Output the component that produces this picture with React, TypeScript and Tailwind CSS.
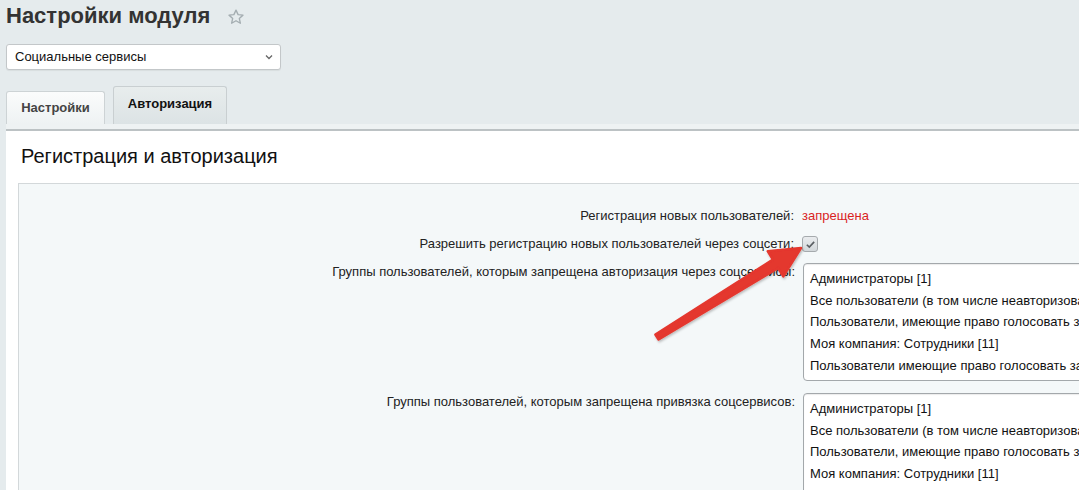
import React from "react";

const items = [
  "Администраторы [1]",
  "Все пользователи (в том числе неавторизованные) [2]",
  "Пользователи, имеющие право голосовать за рейтинг [3]",
  "Моя компания: Сотрудники [11]",
  "Пользователи имеющие право голосовать за авторитет [4]",
];

function ListBox() {
  return (
    <div className="shrink-0 w-[420px] h-[118px] overflow-hidden border border-[#a3a8ab] rounded-l-[4px] bg-white pt-[4px] px-[6px] shadow-[inset_0_1px_1px_rgba(0,0,0,0.08)]">
      {items.map((t) => (
        <div key={t} className="leading-[21.7px] whitespace-nowrap text-[13px] text-[#111]">
          {t}
        </div>
      ))}
    </div>
  );
}

export default function App() {
  return (
    <div
      className="relative w-[1079px] h-[490px] overflow-hidden bg-[#e5ebed] text-[13px]"
      style={{ fontFamily: '"Liberation Sans", Arial, sans-serif' }}
    >
      <div className="pl-[6px] pt-[2px] flex items-center h-[30px]">
        <h1 className="text-[22px] font-bold text-[#333] leading-[30px]">Настройки модуля</h1>
        <svg className="ml-[17px] mt-[1px]" width="18" height="18" viewBox="0 0 24 24" fill="none" stroke="#a4adb1" strokeWidth="1.8" strokeLinejoin="round">
          <path d="M12 2.8l2.8 6 6.5.7-4.9 4.4 1.4 6.4L12 17l-5.8 3.3 1.4-6.4-4.9-4.4 6.5-.7z" />
        </svg>
      </div>

      <div className="ml-[6px] mt-[14px] w-[275px] h-[26px] bg-white border border-[#c3c7c9] rounded-[3px] flex items-center justify-between pl-[8px] pr-[6px] shadow-[0_1px_1px_rgba(0,0,0,0.06)]">
        <span className="text-[#111]">Социальные сервисы</span>
        <svg width="10" height="10" viewBox="0 0 10 10" fill="none" stroke="#666" strokeWidth="1.3">
          <path d="M2 3.5l3 3 3-3" />
        </svg>
      </div>

      <div className="ml-[6px] mt-[16px] flex items-end gap-[8px] h-[38px]">
        <div className="w-[99px] h-[33px] border border-b-0 border-[#cdd3d5] rounded-t-[3px] bg-gradient-to-b from-[#fbfcfc] to-[#eef2f3] flex items-center justify-center font-bold text-[#444]">
          Настройки
        </div>
        <div className="w-[114px] h-[38px] border border-b-0 border-[#c9cfd1] rounded-t-[3px] bg-gradient-to-b from-[#e8eded] to-[#dce3e5] flex items-center justify-center font-bold text-[#111] pb-[4px]">
          Авторизация
        </div>
      </div>

      <div className="ml-[6px] h-[5px] bg-[#eef2f3]" />
      <div className="ml-[6px] bg-white border-t-2 border-[#bcc2c4] pl-[12px]">
        <div className="pl-[3px] pt-[13px] h-[52px] text-[20px] text-[#111] leading-[24px]">
          Регистрация и авторизация
        </div>
        <div className="bg-[#f4f8f9] border-t border-l border-[#d3d8da] pt-[18px] h-[320px]">
          <div className="flex h-[28px] items-center">
            <div className="shrink-0 w-[783px] text-right pr-[8px] text-[#222]">Регистрация новых пользователей:</div>
            <div className="text-[#d91f1f]">запрещена</div>
          </div>
          <div className="flex h-[28px] items-center">
            <div className="shrink-0 w-[783px] text-right pr-[8px] text-[#222]">
              Разрешить регистрацию новых пользователей через соцсети:
            </div>
            <div className="w-[16px] h-[16px] rounded-[3px] border border-[#a5aaad] bg-gradient-to-b from-[#e9ecee] to-[#d3d8db] flex items-center justify-center">
              <svg width="11" height="11" viewBox="0 0 12 12" fill="none" stroke="#5a5f63" strokeWidth="1.8">
                <path d="M2 6.3l2.7 2.6L10 3.2" />
              </svg>
            </div>
          </div>
          <div className="flex mt-[5px]">
            <div className="shrink-0 w-[784px] text-right pr-[8px] text-[#222] leading-[15px] pt-[1px]">
              Группы пользователей, которым запрещена авторизация через соцсервисы:
            </div>
            <ListBox />
          </div>
          <div className="flex mt-[12px]">
            <div className="shrink-0 w-[784px] text-right pr-[8px] text-[#222] leading-[15px] pt-[1px]">
              Группы пользователей, которым запрещена привязка соцсервисов:
            </div>
            <ListBox />
          </div>
        </div>
      </div>

      <svg className="absolute left-0 top-0 pointer-events-none" width="1079" height="490" viewBox="0 0 1079 490">
        <defs>
          <filter id="sh" x="-10%" y="-10%" width="120%" height="120%">
            <feDropShadow dx="1" dy="1.5" stdDeviation="1.2" floodColor="#000" floodOpacity="0.25" />
          </filter>
        </defs>
        <polygon
          filter="url(#sh)"
          fill="#e4372e"
          stroke="#e4372e"
          strokeWidth="2.5"
          strokeLinejoin="round"
          points="655.4,334.5 772.9,259.6 767.7,251.2 801,248 783.3,276.4 778.1,268.0 658.6,339.5"
        />
      </svg>
    </div>
  );
}
